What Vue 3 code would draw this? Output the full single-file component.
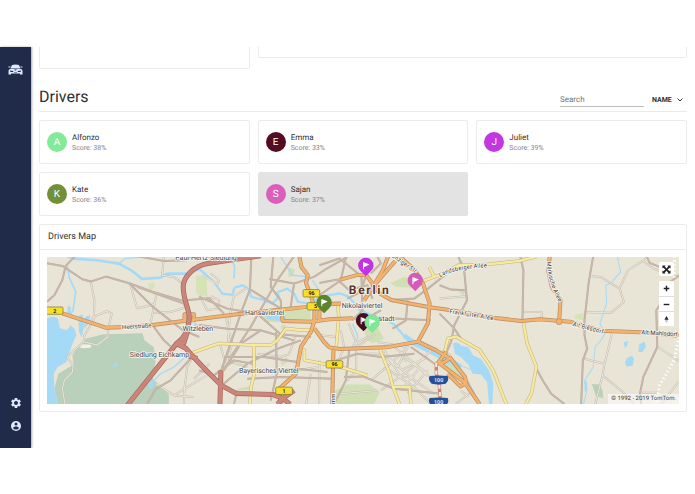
<script setup>
import { ref } from 'vue'

const search = ref('')
const sortBy = ref('name')

const drivers = [
  { name: 'Alfonzo', score: 38, color: '#82ea98' },
  { name: 'Emma', score: 33, color: '#520d22' },
  { name: 'Juliet', score: 39, color: '#c237df' },
  { name: 'Kate', score: 36, color: '#719038' },
  { name: 'Sajan', score: 37, color: '#d95fba', active: true }
]

// Map geometry: three units per pixel at the base size.
const lakes = [
  'M0 184Q18 174 32 184L39 214L60 220L70 205L83 217L88 235L76 262L66 290L58 315L32 330L20 350L22 395L34 441H0Z',
  'M62 146L72 150L70 175L60 172Z', 'M94 178L106 172L112 205L104 240L96 225Z', 'M114 180L130 174L124 200L112 215Z',
  'M200 322L212 315L208 328L198 330Z', 'M302 368L316 372L320 388L306 396Z',
  'M430 205L436 214L430 228L424 216Z M442 195L458 208L448 226L440 214Z',
  'M648 172L682 165L716 180L706 192L664 188Z',
  'M1216 260Q1230 250 1240 266L1262 270L1276 295L1300 306L1324 340L1337 380L1334 441H1324L1318 375L1300 352L1275 350L1262 322L1240 300L1222 290Z',
  'M1728 256L1740 252L1738 266L1730 272Z', 'M1774 262L1790 254L1794 268L1784 286L1771 284Z',
  'M1738 302L1752 296L1758 306L1754 326L1736 328L1731 316Z', 'M1609 375L1617 372L1618 398L1611 405Z'
]
const rivers = [
  { w: 8, d: 'M60 -2L80 5L150 10L215 20L255 42L285 66L340 62L360 50L420 50L456 36' },
  { w: 4, d: 'M215 20L235 5L330 -4' }, { w: 5, d: 'M62 28L66 60L86 105L78 160L68 175' },
  { w: 4, d: 'M310 380L340 350L380 330L412 302' },
  { w: 7, d: 'M456 36L500 75L525 110L555 114L562 92L585 85L606 97L612 120L645 128L675 140L695 120L690 106L720 95L740 110L752 135L790 140L818 120L876 109L905 120L935 158L985 180L1010 183L1042 205L1074 242L1120 268L1206 320' },
  { w: 15, d: 'M1070 236L1105 262L1206 310L1240 330' },
  { w: 5, d: 'M552 0L562 30L560 65' }, { w: 4, d: 'M700 0L735 55L790 60' },
  { w: 4, d: 'M795 70L812 95L800 125' }, { w: 4, d: 'M915 200L932 240L915 268' },
  { w: 3, d: 'M1708 -2L1718 45L1690 78L1674 85L1676 140L1656 200L1672 228L1660 250L1642 270L1636 330L1610 370L1617 400L1607 441' },
  { w: 3, d: 'M1236 325L1290 345L1316 330' }
]
const woods = [
  { c: '#b9d0ba', d: 'M111 246L170 232L286 229L292 250L320 271L325 310L317 365L365 412V441H34L22 395L34 350L80 322L76 295Z' },
  { c: '#b9d0ba', d: 'M1632 381L1654 382L1664 400L1666 424L1644 416Z' },
  { c: '#d5e3b6', d: 'M304 80L322 76L322 94L306 100Z M446 58L478 52L480 120L447 110Z' },
  { c: '#d0dfb4', d: 'M636 160L715 158L790 160L790 188L720 195L650 194Z' },
  { c: '#d0dfb4', d: 'M722 30L742 38L738 55L724 62Z M700 206L712 200L716 214L704 218Z' },
  { c: '#d0dfb4', d: 'M1030 78L1070 60L1116 74L1100 92L1045 90Z M950 218L990 212L1010 245L975 258L960 250Z' },
  { c: '#d0dfb4', d: 'M856 405L900 382L965 382L997 405L980 441H854Z M1060 290L1080 302L1076 318L1062 306Z' },
  { c: '#cddfba', d: 'M1192 304L1248 352L1244 374L1190 322Z M1190 42L1244 10L1248 26L1196 56Z M1228 100L1256 96L1248 116Z' },
  { c: '#d5e3b6', d: 'M1582 174L1608 168L1608 190L1582 186Z M456 65L470 80L470 110L456 120Z' },
  { c: '#d0dfb4', d: 'M535 305L555 298L552 320L532 326Z M700 315L718 300L722 312L704 326Z M570 395L614 385L606 398L575 400Z' },
  { c: '#f2f0e8', d: 'M94 270L104 262L134 263L130 272L108 274Z M44 308L52 292L62 308Z' }
]
const roads = {
  minor: [
    'M131 74L142 130L140 190L112 235L110 254L60 300L78 325L76 345L52 370L46 395L54 441',
    'M110 254L150 264L182 240L184 212L194 170L180 162L150 175L122 195', 'M250 85L270 154L300 148L326 140', 'M328 112L310 200',
    'M350 0L345 55L380 60L406 80', 'M320 168L370 165L420 150', 'M325 380L380 415L440 420', 'M436 300L420 330L412 390L410 441',
    'M440 365L486 320', 'M380 415L486 350', 'M456 115L480 160L512 155L516 130L490 118', 'M466 55L510 82L515 70L490 50',
    'M600 92L560 118L548 170L542 260', 'M518 260L532 310L600 330', 'M535 180L555 260L540 310L525 340',
    'M630 290L700 300L725 292', 'M640 340L720 345L810 330', 'M725 292L745 235', 'M790 350L776 441', 'M816 310L815 441',
    'M880 220L890 270L870 320', 'M926 265L926 340L900 370', 'M960 240L920 260', 'M990 255L1080 270L1050 330L1000 290',
    'M940 290L1010 290L1100 370L1160 410', 'M970 370L1040 310L1080 270', 'M1000 400L1110 320L1150 280', 'M1040 270L1140 350',
    'M1026 340L1100 390L1150 441', 'M1060 340L1140 300', 'M1070 300L1160 370', 'M1080 410L1140 340', 'M880 410L990 400',
    'M1110 340L1060 400', 'M816 235L866 240', 'M904 200L930 268L985 230', 'M1010 280L1060 360L1100 360',
    'M1176 125L1256 118', 'M1426 165L1482 165L1482 186', 'M1225 441L1275 400', 'M1240 400L1262 420', 'M1184 280L1210 295',
    'M1632 57L1658 60L1715 95L1728 135L1690 167L1616 166', 'M1715 95L1740 40L1785 12L1797 0', 'M1785 12L1815 35L1893 62',
    'M1692 230L1670 320L1664 355L1642 441', 'M1610 305L1668 320', 'M1664 355L1720 400L1760 441', 'M1830 270L1893 312', 'M1780 407H1830',
    'M1893 372L1840 441'
  ],
  brown: [
    'M0 19L46 27L106 67L131 74L176 59L246 79L316 104L406 131L486 124L530 170', 'M86 -4L56 27L46 69L22 115L0 134',
    'M246 79L316 149L406 219L456 240', 'M316 204L350 250L370 268', 'M426 175L410 140L270 90', 'M260 -4L350 12L420 10',
    'M300 441L326 395L370 370L430 305', 'M456 120L540 155L630 170L700 232L791 240', 'M612 -2L608 97L700 155',
    'M608 97L580 170L560 230L520 345', 'M678 -2L670 90L700 130L704 192', 'M666 66L740 80L800 60', 'M740 -2L690 70L650 140L610 210L550 300',
    'M456 204L540 215L640 220L740 250', 'M686 225L688 350L670 430', 'M530 300L650 300L750 315', 'M525 384L600 320L690 275L760 250',
    'M600 365L700 360L860 365', 'M456 340L500 355L560 310L616 320', 'M640 220L580 260L530 340', 'M570 400L560 441', 'M616 345L750 335L840 345',
    'M740 80L730 150', 'M800 60L830 40L900 0', 'M816 25L876 5L942 58', 'M896 -2L880 70L816 115', 'M816 78L870 68L905 100L960 85L975 125',
    'M942 58L945 160L915 190', 'M970 50L1000 20L990 0', 'M956 54L940 105L900 125', 'M1031 129L1100 125L1141 95L1210 40',
    'M1080 130L1075 190L1035 215', 'M1010 183L1150 190', 'M866 310L930 290L1000 300L1100 290', 'M916 184L945 190L1000 160',
    'M890 360L945 358L1040 395L1180 410', 'M906 270L895 370L860 440', 'M1090 270L1166 324L1190 290',
    'M1176 85L1210 98L1256 100', 'M1232 -2L1250 45L1258 130L1220 205L1210 255L1190 300', 'M1176 170L1220 215L1240 245', 'M1206 306L1260 375L1296 441',
    'M1418 0L1427 40L1424 192', 'M1466 335L1485 370L1510 410L1550 441', 'M1636 -2L1622 80L1610 190L1610 235L1618 275L1605 310L1600 441',
    'M1893 55L1860 80L1845 130L1825 160L1828 270L1786 360L1776 410L1780 441', 'M1797 0L1805 18L1860 40'
  ],
  yellow: [
    'M431 289L486 269L516 259L616 264L671 264L690 250L716 214L756 219L791 219', 'M619 264L621 349L611 390L608 441',
    'M756 274L771 279L771 309L836 322', 'M871 144L874 180L866 274', 'M996 274L1026 349L1036 389L1056 441', 'M1036 389L1086 389L1090 441',
    'M1121 74L1160 60L1176 54L1236 24L1306 24L1416 12L1466 -1', 'M1426 192L1438 259L1466 329L1451 409L1434 441',
    'M1190 290L1201 244L1226 239L1296 279L1336 339L1376 441', 'M1160 60L1145 30', 'M854 322L960 355'
  ],
  orange: [
    'M46 169L176 212L240 210L316 204L486 182L576 171L711 157L786 149', 'M701 155L706 192L790 194L846 187L916 184',
    'M756 -2L762 30L781 54L776 79L788 110L801 150L801 190L791 224L761 269L746 349L696 394L700 441', 'M816 160L816 190',
    'M801 214L830 255L846 271L876 276L1016 271L1111 254L1141 199L1146 139L1126 79L1101 39L1056 -2', 'M858 279L854 441',
    'M956 54L996 109L1031 129L1146 151L1206 159L1336 182L1421 192L1476 187L1566 194L1576 197L1656 221L1776 226L1893 236',
    'M1056 -2L1010 50L976 90L950 130', 'M1022 -2L1006 39L976 90', 'M876 69L931 54L956 54', 'M816 142L880 140',
    'M1111 254L1166 280L1206 304L1190 315L1176 319L1250 375L1296 441', 'M1206 300L1252 360L1256 378L1238 388L1200 350',
    'M1166 324L1196 285', 'M1506 -2L1501 40L1512 90L1538 130L1534 194', 'M412 172H440V190H412Z'
  ],
  red: [
    'M640 -3L576 6L486 19C440 25 408 60 408 90C408 130 428 160 426 185C424 220 410 245 388 260L240 445',
    'M422 220L410 258L388 260L416 274L436 297L486 349L521 384L566 409L676 412L706 424L728 441', 'M521 340L518 441', 'M740 400L706 424L690 441', 'M425 297L450 304'
  ]
}
const shields = [
  { x: 23, y: 161, t: '2' }, { x: 792, y: 109, t: '96' }, { x: 804, y: 148, t: '5' },
  { x: 861, y: 322, t: '96' }, { x: 710, y: 401, t: '1' }
]
const pins = [
  { x: 955, y: 26, c: '#c233e2' }, { x: 1103, y: 71, c: '#d65ab8' }, { x: 830, y: 137, c: '#5d842e' },
  { x: 948, y: 191, c: '#480c20' }, { x: 974, y: 196, c: '#7fe796' }
]
</script>

<template>
  <div class="shell">
    <nav class="sidebar" aria-label="Main">
      <a href="#" class="nav-link logo" aria-label="Fleet">
        <svg viewBox="0 0 30 22" fill="#dceaff">
          <path d="M8 2Q15 0 22 2L25 9H5Z" />
          <path d="M1 5H5V7H1ZM25 5H29V7H25Z" />
          <path d="M4 10H26Q29 11 29 14V21H24V19H6V21H1V14Q1 11 4 10Z" />
          <path d="M4 13L10 14L11 16H5ZM26 13L20 14L19 16H25ZM12 11H18L16 13H14ZM12 16H18V17H12Z" fill="#1f2b49" />
        </svg>
      </a>
      <div class="nav-bottom">
        <a href="#" class="nav-link" aria-label="Settings">
          <svg viewBox="2 2 20 20" fill="#dceaff"><path fill-rule="evenodd" d="M19.4 13c.1-.3.1-.6.1-1s0-.7-.1-1l2.1-1.6c.2-.2.2-.4.1-.6l-2-3.5c-.1-.2-.4-.3-.6-.2l-2.5 1c-.5-.4-1.100-.7-1.700-1L14.400 2.400c0-.2-.2-.4-.5-.4h-4c-.2 0-.4.200-.5.400L9.100 5.100c-.6.200-1.100.6-1.700 1l-2.500-1c-.2-.1-.5 0-.6.2l-2 3.500c-.1.200-.1.500.1.600L4.600 11c0 .3-.1.700-.1 1s0 .7.100 1l-2.200 1.600c-.2.200-.2.400-.1.600l2 3.500c.1.200.4.300.6.200l2.500-1c.5.400 1.100.7 1.700 1l.4 2.700c0 .2.200.4.500.4h4c.2 0 .5-.2.500-.4l.4-2.700c.6-.2 1.100-.6 1.700-1l2.500 1c.2.100.5 0 .6-.2l2-3.500c.1-.2.1-.5-.1-.6zM12 16a4 4 0 1 1 0-8a4 4 0 0 1 0 8z" /></svg>
        </a>
        <a href="#" class="nav-link" aria-label="Account">
          <svg viewBox="2 2 20 20" fill="#dceaff"><path fill-rule="evenodd" d="M12 2a10 10 0 1 0 0 20a10 10 0 0 0 0-20zm0 3a3 3 0 1 1 0 6a3 3 0 0 1 0-6zm0 14.200c-2.500 0-4.700-1.300-6-3.200c0-2 4-3.100 6-3.100s6 1.100 6 3.100c-1.300 1.900-3.500 3.200-6 3.200z" /></svg>
        </a>
      </div>
    </nav>

    <main class="content">
      <div class="grid summary">
        <section class="card summary-side"></section>
        <section class="card summary-main"></section>
      </div>

      <header class="heading">
        <h1>Drivers</h1>
        <input v-model="search" class="search" type="search" placeholder="Search" aria-label="Search drivers" />
        <div class="sort">
          <select v-model="sortBy" aria-label="Sort by">
            <option value="name">NAME</option>
            <option value="score">SCORE</option>
          </select>
          <svg viewBox="0 0 12 8" fill="none" stroke="#333" stroke-width="2"><path d="M1 1L6 6L11 1" /></svg>
        </div>
      </header>

      <div class="grid drivers">
        <a v-for="d in drivers" :key="d.name" href="#" class="card driver" :class="{ active: d.active }">
          <span class="avatar" :style="{ background: d.color }">{{ d.name[0] }}</span>
          <span class="info">
            <span class="name">{{ d.name }}</span>
            <span class="score">Score: {{ d.score }}%</span>
          </span>
        </a>
      </div>

      <section class="card map-card">
        <h2>Drivers Map</h2>
        <div class="map-body">
          <div class="map">
            <svg class="canvas" viewBox="0 0 1893 441" preserveAspectRatio="xMidYMid slice">
              <rect width="1893" height="441" fill="#e8e4d6" />
              <path v-for="(w, i) in woods" :key="'w' + i" :d="w.d" :fill="w.c" />
              <path v-for="(l, i) in lakes" :key="'l' + i" :d="l" class="lake" />
              <path v-for="(r, i) in rivers" :key="'r' + i" :d="r.d" class="river" :stroke-width="r.w" />
              <g v-for="(paths, kind) in roads" :key="kind" class="road" :class="kind">
                <path v-for="(p, i) in paths" :key="'c' + i" :d="p" class="casing" />
                <path v-for="(p, i) in paths" :key="'f' + i" :d="p" class="fill" />
              </g>
              <circle cx="1534" cy="194" r="9" fill="#f2b36e" stroke="#b98b63" stroke-width="2" />
              <path d="M1166 318V350L1175 385L1179 441" stroke="#c98275" stroke-width="10" fill="none" />
              <path d="M1166 318V350L1175 385L1179 441" stroke="#f7eee8" stroke-width="6" stroke-dasharray="12 10" fill="none" />
              <path d="M1880 -2L1878 70M1893 240L1878 310L1835 385L1825 441" class="boundary" />

              <path id="landsberger" d="M1178 61Q1220 33 1340 31" fill="none" />
              <path id="frankfurter" d="M1205 169L1365 194" fill="none" />
              <path id="maerkische" d="M1498 14Q1497 80 1552 170" fill="none" />
              <path id="greifswalder" d="M1032 0L1140 76" fill="none" />
              <path id="biesdorf" d="M1574 206L1690 237" fill="none" />
              <g class="labels">
                <text x="384" y="9">Paul-Hertz-Siedlung</text>
                <text x="225" y="217" class="street" transform="rotate(-4 225 217)">Heerstraße</text>
                <text x="406" y="223">Witzleben</text>
                <text x="248" y="299">Siedlung Eichkamp</text>
                <text x="593" y="173">Hansaviertel</text>
                <text x="575" y="348">Bayerisches Viertel</text>
                <text x="883" y="152">Nikolaiviertel</text>
                <text x="1041" y="192" text-anchor="end">Luisenstadt</text>
                <text class="street"><textPath href="#landsberger">Landsberger Allee</textPath></text>
                <text class="street"><textPath href="#frankfurter">Frankfurter Allee</textPath></text>
                <text class="street"><textPath href="#maerkische">Märkische Allee</textPath></text>
                <text class="street"><textPath href="#greifswalder">anziger Str.</textPath></text>
                <text class="street"><textPath href="#biesdorf">Alt-Biesdorf</textPath></text>
                <text x="1780" y="232" class="street" transform="rotate(3 1780 232)">Alt-Mahlsdorf</text>
                <text x="863" y="441" class="street" transform="rotate(-90 863 441)">mm</text>
                <text x="904" y="110" class="city">Berlin</text>
              </g>

              <g v-for="(s, i) in shields" :key="'s' + i" class="shield">
                <rect :x="s.x - 25" :y="s.y - 11" width="50" height="22" rx="4" />
                <text :x="s.x" :y="s.y + 6">{{ s.t }}</text>
              </g>
              <g v-for="y in [369, 435]" :key="y" class="motorway">
                <path :d="`M1146 ${y - 12}Q1173 ${y - 16} 1200 ${y - 12}Q1206 ${y} 1194 ${y + 11}Q1173 ${y + 16} 1152 ${y + 11}Q1140 ${y} 1146 ${y - 12}Z`" />
                <text x="1173" :y="y + 6">100</text>
              </g>
              <g v-for="(p, i) in pins" :key="'p' + i" :transform="`translate(${p.x} ${p.y})`">
                <path d="M0 32L-14 18A23 23 0 1 1 14 18Z" :fill="p.c" />
                <path d="M-7 -10V11" stroke="#fff" stroke-width="3" />
                <path d="M-6 -10L11 -3L-6 5Z" fill="#fff" />
              </g>
            </svg>

            <div class="controls">
              <button type="button" class="control" aria-label="Full screen">
                <svg viewBox="0 0 20 20" fill="#222"><path d="M1 1H8L6 3L10 7.500L14 3L12 1H19V8L17 6L12.500 10L17 14L19 12V19H12L14 17L10 12.500L6 17L8 19H1V12L3 14L7.500 10L3 6L1 8Z" /></svg>
              </button>
              <div class="control-group">
                <button type="button" class="control" aria-label="Zoom in"><svg viewBox="0 0 20 20" stroke="#222" stroke-width="4"><path d="M10 2V18M2 10H18" /></svg></button>
                <button type="button" class="control" aria-label="Zoom out"><svg viewBox="0 0 20 20" stroke="#222" stroke-width="4"><path d="M2 10H18" /></svg></button>
                <button type="button" class="control" aria-label="Reset north"><svg viewBox="0 0 20 20"><path d="M10 0L16 11H4Z" fill="#222" /><path d="M5 12H15L10 20Z" fill="#bbb" /></svg></button>
              </div>
            </div>
            <span class="credit">© 1992 - 2019 TomTom.</span>
          </div>
        </div>
      </section>
    </main>
  </div>
</template>

<style>
body {
  background: #fff;
}
</style>

<style scoped>
.shell {
  display: flex;
  margin-top: 47px;
  font-family: Roboto, "Liberation Sans", sans-serif;
  color: #303030;
  text-rendering: geometricPrecision;
}
.shell * {
  box-sizing: border-box;
}
.sidebar {
  flex: 0 0 31px;
  display: flex;
  flex-direction: column;
  justify-content: space-between;
  align-items: center;
  padding: 17px 0;
  background: #1f2b49;
  box-shadow: 1px 0 2px rgba(31, 43, 73, 0.4);
}
.nav-link {
  display: block;
  width: 10px;
  height: 10px;
}
.nav-link svg {
  display: block;
  width: 100%;
}
.logo {
  width: 15px;
  height: 12px;
}
.nav-bottom {
  display: grid;
  gap: 13px;
}
.content {
  flex: 1;
  min-width: 0;
  padding: 0 8px 36px;
}
.grid {
  display: grid;
  grid-template-columns: repeat(3, 1fr);
  gap: 8px;
}
.card {
  border: 1px solid #ebebeb;
  border-radius: 2px;
  background: #fff;
}
.summary {
  align-items: start;
}
.summary .card {
  border-top: 0;
  border-radius: 0 0 2px 2px;
}
.summary-side {
  height: 22px;
}
.summary-main {
  grid-column: span 2;
  height: 11px;
}
.heading {
  display: flex;
  align-items: center;
  margin: 13px 0 8px;
  height: 30px;
  border-bottom: 1px solid #ebebeb;
}
h1 {
  flex: 1;
  margin: 0;
  font-size: 16px;
  font-weight: 400;
  line-height: 20px;
}
.search {
  width: 84px;
  height: 15px;
  margin-top: 6px;
  padding: 1px 0 0;
  border: 0;
  border-bottom: 1px solid #bdbdbd;
  border-radius: 0;
  outline: 0;
  background: none;
  font: 8px/12px Roboto, sans-serif;
  text-rendering: inherit;
  appearance: none;
}
.search::placeholder {
  color: #777;
  opacity: 1;
}
.sort {
  display: flex;
  align-items: center;
  gap: 4px;
  padding: 7px 4px 0 8px;
}
.sort select {
  width: 21px;
  padding: 0;
  border: 0;
  background: none;
  color: #303030;
  font: 700 7px/12px Roboto, sans-serif;
  text-rendering: inherit;
  appearance: none;
}
.sort svg {
  width: 6px;
  height: 4px;
}
.driver {
  display: flex;
  align-items: center;
  gap: 5px;
  height: 44px;
  padding: 0 7px;
  color: inherit;
  text-decoration: none;
}
.driver.active {
  background: #e3e3e3;
  border-color: #e3e3e3;
}
.avatar {
  width: 20px;
  height: 20px;
  border-radius: 50%;
  color: #fff;
  font-size: 10px;
  line-height: 21px;
  text-align: center;
}
.info {
  display: grid;
}
.name {
  font-size: 8px;
  line-height: 11px;
}
.score {
  color: #858585;
  font-size: 7px;
  line-height: 10px;
}
.map-card {
  margin-top: 8px;
}
h2 {
  margin: 0;
  padding: 1px 8px 0;
  border-bottom: 1px solid #ebebeb;
  font-size: 9px;
  font-weight: 400;
  line-height: 23px;
}
.map-body {
  padding: 7px;
}
.map {
  position: relative;
}
.canvas {
  display: block;
  width: 100%;
  height: 147px;
}
.lake {
  fill: #a5daf7;
}
.river {
  fill: none;
  stroke: #a5daf7;
  stroke-linejoin: round;
}
.road path {
  fill: none;
  stroke-linejoin: round;
}
.minor .casing {
  stroke: #c3bbae;
  stroke-width: 6;
}
.minor .fill {
  stroke: #eae6dc;
  stroke-width: 3;
}
.brown .casing {
  stroke: #bba99c;
  stroke-width: 6;
}
.brown .fill {
  stroke: #c8b8ab;
  stroke-width: 4;
}
.yellow .casing {
  stroke: #c2b184;
  stroke-width: 10;
}
.yellow .fill {
  stroke: #f8ea9c;
  stroke-width: 7;
}
.orange .casing {
  stroke: #b98b63;
  stroke-width: 12;
}
.orange .fill {
  stroke: #f2b36e;
  stroke-width: 8;
}
.red .casing {
  stroke: #a76560;
  stroke-width: 15;
}
.red .fill {
  stroke: #cb8679;
  stroke-width: 11;
}
.boundary {
  fill: none;
  stroke: #fff;
  stroke-width: 9;
  stroke-dasharray: 4 8;
}
.labels text {
  fill: #44454c;
  stroke: #f7f5ef;
  stroke-width: 5px;
  stroke-linejoin: round;
  paint-order: stroke;
  font-family: Roboto, "Noto Sans", sans-serif;
  font-size: 21px;
}
.labels .street {
  fill: #383838;
  font-size: 18px;
}
.labels .city {
  fill: #5c332c;
  font-size: 36px;
  font-weight: 700;
  letter-spacing: 5px;
}
.shield rect {
  fill: #f8df2c;
  stroke: #77692d;
  stroke-width: 2;
}
.shield text,
.motorway text {
  font-size: 16px;
  font-weight: 500;
  text-anchor: middle;
}
.motorway path {
  fill: #24509a;
}
.motorway text {
  fill: #fff;
}
.controls {
  position: absolute;
  top: 5px;
  right: 5px;
  display: grid;
  gap: 5px;
}
.control {
  display: grid;
  place-items: center;
  width: 15px;
  height: 14px;
  padding: 0;
  border: 0;
  border-radius: 2px;
  background: #fff;
}
.control svg {
  width: 9px;
  height: 9px;
}
.control-group {
  border-radius: 2px;
  background: #fff;
}
.control-group .control {
  height: 15px;
}
.control-group .control + .control {
  border-top: 1px solid #ddd;
  border-radius: 0;
}
.control-group svg {
  width: 7px;
  height: 7px;
}
.credit {
  position: absolute;
  right: 0;
  bottom: 0;
  padding: 0 3px;
  background: rgba(255, 255, 255, 0.5);
  color: #404040;
  font-size: 6px;
  line-height: 10px;
}
</style>
